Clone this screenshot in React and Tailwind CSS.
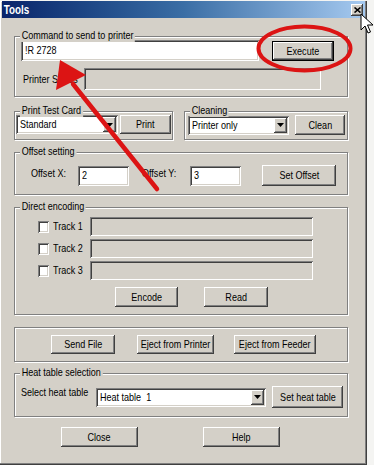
import React from "react";

const raised =
  "bg-[#d4d0c8] shadow-[inset_-1px_-1px_0_#404040,inset_1px_1px_0_#ffffff,inset_-2px_-2px_0_#808080,inset_2px_2px_0_#d4d0c8]";
const sunken =
  "shadow-[inset_1px_1px_0_#808080,inset_-1px_-1px_0_#ffffff,inset_2px_2px_0_#404040,inset_-2px_-2px_0_#d4d0c8]";

// the screenshot is squeezed sideways, so text is narrowed to match
const T = ({ center, className = "", children }) => (
  <span
    className={`inline-block whitespace-pre scale-x-[0.82] ${
      center ? "origin-center" : "origin-left"
    } ${className}`}
  >
    {children}
  </span>
);

const Btn = ({ className = "", children }) => (
  <div className={`flex items-center justify-center shrink-0 text-black ${raised} ${className}`}>
    <T center>{children}</T>
  </div>
);

const Field = ({ className = "", white, children }) => (
  <div
    className={`flex items-center shrink-0 pl-[4px] ${sunken} ${
      white ? "bg-white" : "bg-[#d4d0c8]"
    } ${className}`}
  >
    {children && <T>{children}</T>}
  </div>
);

const Combo = ({ className = "", value }) => (
  <div className={`flex shrink-0 p-[2px] bg-white ${sunken} ${className}`}>
    <div className="flex-1 flex items-center pl-[2px]">
      <T>{value}</T>
    </div>
    <div className={`w-[13px] flex items-center justify-center ${raised}`}>
      <svg width="7" height="4" viewBox="0 0 7 4">
        <path d="M0 0h7L3.5 4z" fill="#000" />
      </svg>
    </div>
  </div>
);

const Group = ({ label, className = "", children }) => (
  <div
    className={`relative border border-[#808080] shadow-[inset_1px_1px_0_#ffffff,1px_1px_0_#ffffff] ${className}`}
  >
    {label && (
      <span className="absolute -top-[8px] left-[5px] leading-[13px]">
        <T className="px-[2px] bg-[#d4d0c8]">{label}</T>
      </span>
    )}
    {children}
  </div>
);

const Check = () => (
  <div className={`w-[11px] h-[12px] bg-white shrink-0 ${sunken}`} />
);

export default function App() {
  const tracks = ["Track 1", "Track 2", "Track 3"];
  return (
    <div className="w-[374px] h-[465px] bg-[#f4f4f2] relative overflow-hidden font-['Liberation_Sans',Arial,sans-serif] text-[11px] text-black">
      <div className="w-[367px] h-[464px] bg-[#d4d0c8] shadow-[inset_-1px_-1px_0_#404040,inset_-2px_-2px_0_#808080,inset_1px_1px_0_#ffffff]">
        {/* title bar */}
        <div className="mt-[1px] mx-[2px] h-[17px] flex items-center justify-between bg-gradient-to-r from-[#0a246a] via-[#3a6ea5] to-[#a6caf0]">
          <T className="pl-[2px] font-bold text-white text-[12px] leading-none">Tools</T>
          <div className={`w-[12px] h-[12px] mr-[2px] flex items-center justify-center ${raised}`}>
            <svg width="7" height="6" viewBox="0 0 7 6">
              <path d="M0.5 0.5l6 5M6.5 0.5l-6 5" stroke="#000" strokeWidth="1.6" />
            </svg>
          </div>
        </div>

        <div className="pl-[14px] flex flex-col">
          {/* command */}
          <Group label="Command to send to printer" className="mt-[18px] w-[334px] h-[61px]">
            <div className="flex items-start pt-[3px] pl-[6px]">
              <Field white className="w-[238px] h-[21px]">!R 2728</Field>
              <div className="ml-[13px] mt-[1px] border border-black">
                <Btn className="w-[60px] h-[18px]">Execute</Btn>
              </div>
            </div>
            <div className="flex items-center mt-[7px] pl-[8px]">
              <div className="w-[61px]">
                <T>Printer Status</T>
              </div>
              <Field className="w-[237px] h-[22px]" />
            </div>
          </Group>

          {/* print test card / cleaning */}
          <div className="flex mt-[14px]">
            <Group label="Print Test Card" className="w-[159px] h-[29px]">
              <div className="flex items-center pt-[3px] pl-[1px] gap-[2px]">
                <Combo className="w-[102px] h-[19px]" value="Standard" />
                <Btn className="w-[51px] h-[19px]">Print</Btn>
              </div>
            </Group>
            <Group label="Cleaning" className="ml-[11px] w-[164px] h-[29px]">
              <div className="flex items-center pt-[3px] pl-[3px] gap-[6px]">
                <Combo className="w-[101px] h-[19px]" value="Printer only" />
                <Btn className="w-[50px] h-[20px]">Clean</Btn>
              </div>
            </Group>
          </div>

          {/* offset */}
          <Group label="Offset setting" className="mt-[12px] w-[334px] h-[43px]">
            <div className="flex items-center pt-[12px] pl-[16px]">
              <div className="w-[47px] -mt-[5px]">
                <T>Offset X:</T>
              </div>
              <Field white className="w-[51px] h-[20px]">2</Field>
              <div className="ml-[13px] w-[48px] -mt-[5px]">
                <T>Offset Y:</T>
              </div>
              <Field white className="w-[51px] h-[20px]">3</Field>
              <Btn className="ml-[21px] w-[74px] h-[21px]">Set Offset</Btn>
            </div>
          </Group>

          {/* direct encoding */}
          <Group label="Direct encoding" className="mt-[12px] w-[334px] h-[108px]">
            <div className="flex flex-col gap-[3px] pt-[9px] pl-[23px]">
              {tracks.map((t) => (
                <div key={t} className="flex items-center">
                  <Check />
                  <div className="ml-[4px] w-[37px]">
                    <T>{t}</T>
                  </div>
                  <Field className="w-[223px] h-[19px]" />
                </div>
              ))}
            </div>
            <div className="flex mt-[7px] pl-[100px] gap-[26px]">
              <Btn className="w-[63px] h-[20px]">Encode</Btn>
              <Btn className="w-[64px] h-[20px]">Read</Btn>
            </div>
          </Group>

          {/* file / eject */}
          <Group className="mt-[12px] w-[334px] h-[35px]">
            <div className="flex pt-[7px] pl-[36px]">
              <Btn className="w-[64px] h-[19px]">Send File</Btn>
              <Btn className="ml-[22px] w-[77px] h-[19px]">Eject from Printer</Btn>
              <Btn className="ml-[20px] w-[82px] h-[19px]">Eject from Feeder</Btn>
            </div>
          </Group>

          {/* heat table */}
          <Group label="Heat table selection" className="mt-[11px] w-[334px] h-[44px]">
            <div className="flex items-center pt-[12px] pl-[6px]">
              <div className="w-[75px] self-start leading-[13px]">
                <T>Select heat table</T>
              </div>
              <Combo className="w-[170px] h-[19px]" value="Heat table  1" />
              <Btn className="ml-[6px] w-[71px] h-[22px]">Set heat table</Btn>
            </div>
          </Group>

          <div className="flex mt-[10px] pl-[47px] gap-[65px]">
            <Btn className="w-[77px] h-[20px]">Close</Btn>
            <Btn className="w-[77px] h-[20px]">Help</Btn>
          </div>
        </div>
      </div>

      {/* red annotation + mouse cursor */}
      <svg className="absolute inset-0 pointer-events-none" width="374" height="465" viewBox="0 0 374 465">
        <ellipse cx="304.5" cy="48.5" rx="46" ry="22" fill="none" stroke="#dc1414" strokeWidth="4" />
        <path d="M73 84L157 189" stroke="#dc1414" strokeWidth="4.5" strokeLinecap="round" />
        <path d="M60 60L56 90L86 75z" fill="#dc1414" />
        <path
          d="M361 14v16l4-4 3 7 2.5-1-3-7h5.5z"
          fill="#fff"
          stroke="#000"
          strokeWidth="1"
          strokeLinejoin="round"
        />
      </svg>
    </div>
  );
}
